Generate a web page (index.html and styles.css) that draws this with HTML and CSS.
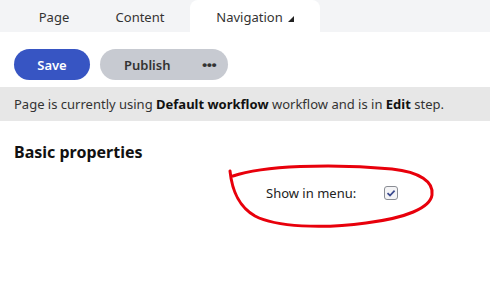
FILE: index.html
```html
<!DOCTYPE html>
<html lang="en">
<head>
    <meta charset="UTF-8" />
    <title>Page editor</title>
    <link rel="stylesheet" href="styles.css">
</head>
<body>
    <div class="tabs">
        <div class="tab tab-page">Page</div>
        <div class="tab">Content</div>
        <div class="tab active">Navigation <span class="caret"></span></div>
    </div>

    <div class="actions">
        <button class="btn btn-save">Save</button>
        <div class="btn btn-publish">
            <span>Publish</span>
            <span class="dots">&middot;&middot;&middot;</span>
        </div>
    </div>

    <div class="workflow">Page is currently using <b>Default workflow</b> workflow and is in <b>Edit</b> step.</div>

    <div class="section">
        <h2>Basic properties</h2>
        <div class="field">
            <label>Show in menu:</label>
            <span class="checkbox">
                <svg width="10" height="8" viewBox="0 0 10 8"><path d="M1.5 4.2 L4 6.5 L8.6 1.6" fill="none" stroke="#3b4a8e" stroke-width="1.7"/></svg>
            </span>
        </div>
    </div>

    <!-- hand-drawn annotation -->
    <svg class="scribble" width="490" height="282" viewBox="0 0 490 282">
        <path d="M233,176 C262,166 330,163 392,169 C420,172 434,182 432,195 C430,208 406,218 366,223 C322,229 276,227 255,216 C238,206 232,190 230,171" fill="none" stroke="#e8000b" stroke-width="3" stroke-linecap="round"/>
    </svg>
</body>
</html>
```

FILE: styles.css
```css
* {
    box-sizing: border-box;
    margin: 0;
    padding: 0;
}

body {
    font-family: 'Noto Sans', 'Open Sans', sans-serif;
    color: #222;
    background-color: #fff;
    width: 490px;
    height: 282px;
    overflow: hidden;
    position: relative;
}

/* Tabs */
.tabs {
    display: flex;
    height: 32px;
    background-color: #f3f4f6;
    padding-left: 12px;
}

.tab {
    width: 88px;
    display: flex;
    align-items: center;
    justify-content: center;
    font-size: 13px;
    color: #333;
    padding-top: 2px;
}

.tab-page {
    width: 84px;
}

.tab.active {
    width: 130px;
    margin-left: 6px;
    background-color: #fff;
    border-radius: 8px 8px 0 0;
    gap: 5px;
}

.caret {
    width: 0;
    height: 0;
    border-left: 6px solid transparent;
    border-bottom: 6px solid #222;
    margin-top: 4px;
}

/* Buttons */
.actions {
    display: flex;
    gap: 10px;
    padding: 17px 14px 0;
}

.btn {
    height: 31px;
    border: none;
    border-radius: 16px;
    font-family: inherit;
    font-size: 13px;
    font-weight: 600;
    display: flex;
    align-items: center;
}

.btn-save {
    width: 76px;
    justify-content: center;
    background-color: #3755c3;
    color: #fff;
}

.btn-publish {
    width: 128px;
    background-color: #c7cad1;
    color: #333;
    padding: 0 12px 0 24px;
    justify-content: space-between;
}

.dots {
    font-size: 20px;
    font-weight: 900;
    letter-spacing: -1px;
    line-height: 1;
    color: #333;
}

/* Workflow bar */
.workflow {
    margin-top: 7px;
    height: 34px;
    line-height: 34px;
    background-color: #e7e7e7;
    padding: 0 14px;
    font-size: 13px;
    color: #333;
    white-space: nowrap;
}

.workflow b {
    color: #111;
}

/* Basic properties */
.section {
    padding: 20px 14px 0;
}

.section h2 {
    font-size: 16px;
    font-weight: 700;
    color: #111;
}

.field {
    display: flex;
    align-items: center;
    padding: 21px 0 0 252px;
    font-size: 13px;
    color: #222;
}

.field label {
    width: 118px;
}

.checkbox {
    width: 14px;
    height: 14px;
    border: 1px solid #8a8d94;
    border-radius: 3px;
    display: flex;
    align-items: center;
    justify-content: center;
    background-color: #f4f4f6;
}

.scribble {
    position: absolute;
    top: 0;
    left: 0;
    pointer-events: none;
}
```
